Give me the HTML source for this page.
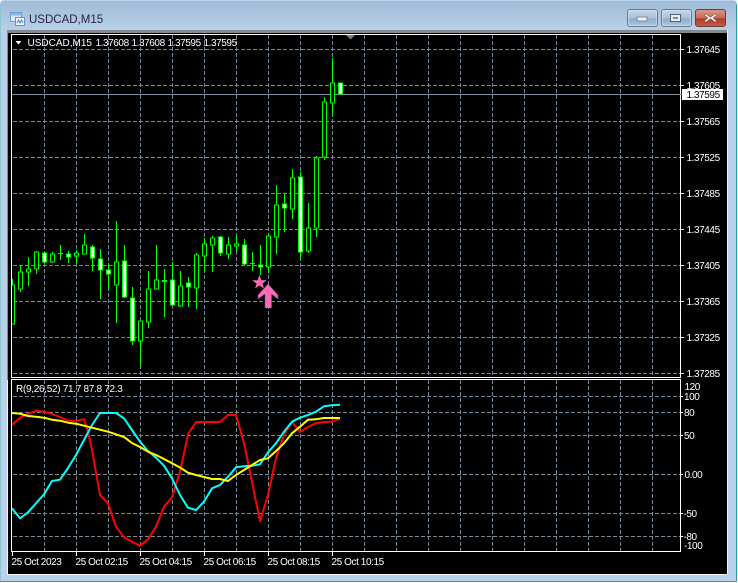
<!DOCTYPE html>
<html>
<head>
<meta charset="utf-8">
<title>USDCAD,M15</title>
<style>
html,body{margin:0;padding:0;background:#fff;width:738px;height:583px;overflow:hidden}
svg{display:block}
text{font-family:"Liberation Sans",sans-serif;font-size:10px;fill:#fff}
.n{letter-spacing:-.42px}
.d{letter-spacing:-.3px}
</style>
</head>
<body>
<svg width="738" height="583" viewBox="0 0 738 583" xmlns="http://www.w3.org/2000/svg">
<defs>
<linearGradient id="tb" x1="0" y1="0" x2="0" y2="1"><stop offset="0" stop-color="#9fbbd6"/><stop offset="1" stop-color="#b8d1e9"/></linearGradient>
<linearGradient id="bb" x1="0" y1="0" x2="0" y2="1"><stop offset="0" stop-color="#c3d6e8"/><stop offset=".5" stop-color="#a9c2da"/><stop offset=".55" stop-color="#8fabc8"/><stop offset="1" stop-color="#adc8e2"/></linearGradient>
<linearGradient id="rb" x1="0" y1="0" x2="0" y2="1"><stop offset="0" stop-color="#d79a8c"/><stop offset=".5" stop-color="#c8695a"/><stop offset=".55" stop-color="#b03a28"/><stop offset="1" stop-color="#c4604a"/></linearGradient>
<clipPath id="mc"><rect x="12" y="35" width="668" height="342"/></clipPath>
<clipPath id="sc"><rect x="12" y="380" width="668" height="171"/></clipPath>
</defs>

<!-- window frame -->
<rect x="0" y="0" width="737" height="582" rx="4" fill="#b9d1ea"/>
<rect x="1" y="1" width="735" height="30" fill="url(#tb)"/>
<path d="M0 581.5H737M736.5 4V582" stroke="#2a9db0" stroke-width="1"/>
<path d="M.5 4V581" stroke="#8fc4d2"/>
<rect x="7" y="30" width="721" height="545" fill="#f2f5f8"/>
<rect x="7" y="30" width="720" height="3" fill="#85898d"/>
<rect x="7" y="30" width="3" height="350" fill="#85898d"/>
<rect x="8" y="33" width="719" height="541" fill="#000"/>

<!-- title -->
<path d="M10.5 12.5h11v9h-11z" fill="#dbe9f8" stroke="#6f9fd6"/>
<path d="M11 13h10v2.500H11z" fill="#8db8e8"/>
<path d="M15.500 17.500h9v8h-9z" fill="#f2f7fd" stroke="#5f93d2"/>
<path d="M17 23l1.500-3 1.500 3 1.500-3 1.500 3" fill="none" stroke="#4c86c8"/>
<text x="29" y="23" style="font-size:11.500px;fill:#2a2145">USDCAD,M15</text>

<!-- window buttons -->
<rect x="627.500" y="9.500" width="30" height="17" rx="2.500" fill="url(#bb)" stroke="#65788e"/>
<rect x="628.500" y="10.500" width="28" height="15" rx="1.500" fill="none" stroke="#dbe6f1" stroke-opacity=".6"/>
<rect x="637" y="17" width="10" height="4" fill="#e9edf2" stroke="#66727f" stroke-width=".7"/>
<rect x="661.500" y="9.500" width="30" height="17" rx="2.500" fill="url(#bb)" stroke="#65788e"/>
<rect x="662.500" y="10.500" width="28" height="15" rx="1.500" fill="none" stroke="#dbe6f1" stroke-opacity=".6"/>
<rect x="670.500" y="14.500" width="10" height="7" fill="#e9edf2" stroke="#55616e"/>
<rect x="673" y="17" width="5" height="2" fill="#7d8b99"/>
<rect x="695.500" y="9.500" width="30" height="17" rx="2.500" fill="url(#rb)" stroke="#6e3a36"/>
<path d="M706 14l4.500 3.200 4.500-3.200 2 1-4 3 4 3-2 1-4.500-3.200-4.500 3.200-2-1 4-3-4-3z" fill="#f5f3f1" stroke="#7b3a30" stroke-width=".5"/>

<!-- plot borders -->
<g fill="none" stroke="#fff" shape-rendering="crispEdges">
<rect x="11.500" y="34.500" width="669" height="343"/>
<rect x="11.500" y="379.500" width="669" height="172"/>
</g>

<!-- grid -->
<g stroke="#778899" stroke-dasharray="4 2" fill="none" shape-rendering="crispEdges">
<path d="M13 49.500H680M13 85.500H680M13 121.500H680M13 157.500H680M13 193.500H680M13 229.500H680M13 265.500H680M13 301.500H680M13 337.500H680M13 373.500H680"/>
<path d="M44.500 35V377M76.500 35V377M108.500 35V377M140.500 35V377M172.500 35V377M204.500 35V377M236.500 35V377M268.500 35V377M300.500 35V377M332.500 35V377M364.500 35V377M396.500 35V377M428.500 35V377M460.500 35V377M492.500 35V377M524.500 35V377M556.500 35V377M588.500 35V377M620.500 35V377M652.500 35V377"/>
<path d="M13 396.500H680M13 412.500H680M13 435.500H680M13 474.500H680M13 513.500H680M13 536.500H680"/>
<path d="M44.500 380V551M76.500 380V551M108.500 380V551M140.500 380V551M172.500 380V551M204.500 380V551M236.500 380V551M268.500 380V551M300.500 380V551M332.500 380V551M364.500 380V551M396.500 380V551M428.500 380V551M460.500 380V551M492.500 380V551M524.500 380V551M556.500 380V551M588.500 380V551M620.500 380V551M652.500 380V551"/>
</g>
<path d="M12 94.500H682" stroke="#7f8c9a" shape-rendering="crispEdges"/>

<!-- ticks -->
<g stroke="#fff" shape-rendering="crispEdges">
<path d="M681 49.500h3M681 85.500h3M681 121.500h3M681 157.500h3M681 193.500h3M681 229.500h3M681 265.500h3M681 301.500h3M681 337.500h3M681 373.500h3"/>
<path d="M681 396.500h2M681 412.500h2M681 435.500h2M681 474.500h2M681 513.500h2M681 536.500h2"/>
<path d="M12.500 552v4M76.500 552v4M140.500 552v4M204.500 552v4M268.500 552v4M332.500 552v4"/>
</g>

<!-- candles -->
<g clip-path="url(#mc)" shape-rendering="crispEdges">
<path fill="none" stroke="#00ff00" d="M12.500 279V324M20.500 265V292M28.500 257V286M36.500 251V274M44.500 252V263M52.500 252V263M60.500 245V260M68.500 251V263M76.500 250V264M84.500 234V254M92.500 245V271M100.500 249V299M108.500 263V289M116.500 221V323M124.500 245V298M132.500 287V345M140.500 321V365M148.500 271V328M156.500 245V289M164.500 269V317M172.500 262V306M180.500 271V307M188.500 277V307M196.500 253V309M204.500 238V271M212.500 236V272M220.500 236V256M228.500 237V259M236.500 236V252M244.500 239V266M252.500 252V271M260.500 245V275M268.500 233V273M276.500 185V254M284.500 193V232M292.500 169V219M300.500 172V260M308.500 203V253M316.500 156V237M324.500 97V160M332.500 58V115"/>
<path fill="#000" stroke="#00ff00" d="M10.500 285h4v39h-4zM18.500 272h4v17h-4zM26.500 269h4v3h-4zM34.500 252h4v17h-4zM50.500 254h4v8h-4zM74.500 253h4v3h-4zM82.500 245h4v9h-4zM114.500 262h4v23h-4zM138.500 321h4v20h-4zM146.500 289h4v33h-4zM154.500 280h4v9h-4zM178.500 286h4v20h-4zM194.500 255h4v33h-4zM202.500 244h4v12h-4zM210.500 238h4v7h-4zM226.500 245h4v9h-4zM234.500 244h4v2h-4zM266.500 236h4v31h-4zM274.500 205h4v32h-4zM290.500 178h4v31h-4zM306.500 228h4v23h-4zM314.500 158h4v70h-4zM322.500 102h4v55h-4zM330.500 83h4v20h-4z"/>
<path fill="#fff" stroke="#00ff00" d="M42.500 253h4v9h-4zM66.500 254h4v3h-4zM90.500 247h4v11h-4zM98.500 259h4v11h-4zM106.500 270h4v4h-4zM122.500 261h4v36h-4zM130.500 298h4v43h-4zM170.500 280h4v25h-4zM186.500 283h4v4h-4zM218.500 237h4v16h-4zM242.500 245h4v19h-4zM258.500 265h4v2h-4zM282.500 204h4v4h-4zM298.500 177h4v75h-4zM338.500 83h4v11h-4z"/>
<path fill="none" stroke="#00ff00" d="M58 253.500h5M162 280.500h5M162 281.500h5M250 263.500h5"/>
</g>

<!-- arrow + star -->
<polygon points="268,284 278,295 278,299 271.500,294 271.500,308 265,308 265,294 258,299 258,295" fill="#ff69b4" stroke="#7a3fb0" stroke-width=".5"/>
<polygon points="259.500,275 261.300,280.300 266.800,280.300 262.400,283.600 264,288.500 259.500,285.500 255,288.500 256.600,283.600 252.200,280.300 257.700,280.300" fill="#ff69b4"/>

<!-- indicator lines -->
<g clip-path="url(#sc)" fill="none" stroke-width="2" stroke-linejoin="round">
<polyline stroke="#ff0000" points="12,425 20,417.700 28,414 36,410.700 44,411.700 52,414 60,417 68,420.700 76,420.700 84,419.300 88,431.700 92,450 100,495 108,503.300 116,526.700 124,537.300 132,541.700 140,545.700 148,539.300 156,526.700 164,506.700 172,497.300 180,471.700 188,434.300 196,422 204,422 212,422 220,422 228,415 236,415 244,443 252,482 260,521 268,495 276,458 284,435 292,422 300,432 308,427 316,423 324,422 332,421.700 340,418.700"/>
<polyline stroke="#00ffff" points="12,508.300 20,518.300 28,512.300 36,503.300 44,494.300 52,481 60,479.700 68,468 76,455 84,440 92,425 100,413 108,413 116,413 124,418.300 132,430 140,441.700 148,451 156,457.700 164,465.700 172,478.300 180,495 188,507.700 196,510 204,501.700 212,488.300 220,485 228,476.700 236,467.300 244,466.300 252,465.700 260,464.300 268,452.300 276,443.300 284,431.700 292,421.700 300,417.700 308,415 316,411.700 324,406.300 332,405.300 340,404.700"/>
<polyline stroke="#ffff00" points="12,413 20,413.700 28,416 36,416.700 44,417.700 52,419.700 60,420.700 68,422.700 76,423.700 84,425.700 92,427.700 100,429.700 108,431.700 116,434.300 124,437 132,443 140,447 148,451.700 156,455 164,459 172,463.300 180,467.500 188,472.700 196,475 204,477 212,479 220,479 228,481 236,475 244,470 252,465 260,460 268,458.300 276,451 284,443.300 292,433.300 300,426.700 308,419.700 316,419.300 324,418 332,418 340,418"/>
</g>

<!-- header -->
<polygon points="15.500,41 21.500,41 18.500,44.500" fill="#fff"/>
<polygon points="346,35 355,35 350.500,39.500" fill="#6f8090"/>
<text x="27.500" y="46">USDCAD,M15</text>
<text x="95.500" y="46" class="n">1.37608</text>
<text x="131.500" y="46" class="n">1.37608</text>
<text x="167.500" y="46" class="n">1.37595</text>
<text x="203.500" y="46" class="n">1.37595</text>
<text x="16" y="392" class="d">R(9,26,52) 71.7 87.8 72.3</text>

<!-- price axis -->
<g class="n">
<text x="686.500" y="53" class="n">1.37645</text>
<text x="686.500" y="89" class="n">1.37605</text>
<text x="686.500" y="125" class="n">1.37565</text>
<text x="686.500" y="161" class="n">1.37525</text>
<text x="686.500" y="197" class="n">1.37485</text>
<text x="686.500" y="233" class="n">1.37445</text>
<text x="686.500" y="269" class="n">1.37405</text>
<text x="686.500" y="305" class="n">1.37365</text>
<text x="686.500" y="341" class="n">1.37325</text>
<text x="686.500" y="377" class="n">1.37285</text>
</g>
<rect x="682" y="89" width="41" height="11" fill="#fff"/>
<text x="686.500" y="98" class="n" style="fill:#000">1.37595</text>

<!-- indicator axis -->
<text x="684.500" y="390" class="n">120</text>
<text x="684" y="400" class="n">100</text>
<text x="684" y="416" class="n">80</text>
<text x="684" y="439" class="n">50</text>
<text x="684.500" y="478" class="n">0.00</text>
<text x="683.500" y="517" class="n">-50</text>
<text x="683.500" y="540" class="n">-80</text>
<text x="684" y="549" class="n">-100</text>

<!-- time axis -->
<text x="11.500" y="565" class="n">25 Oct 2023</text>
<text x="75.500" y="565" class="n">25 Oct 02:15</text>
<text x="139.500" y="565" class="n">25 Oct 04:15</text>
<text x="203.500" y="565" class="n">25 Oct 06:15</text>
<text x="267.500" y="565" class="n">25 Oct 08:15</text>
<text x="331.500" y="565" class="n">25 Oct 10:15</text>
</svg>
</body>
</html>
